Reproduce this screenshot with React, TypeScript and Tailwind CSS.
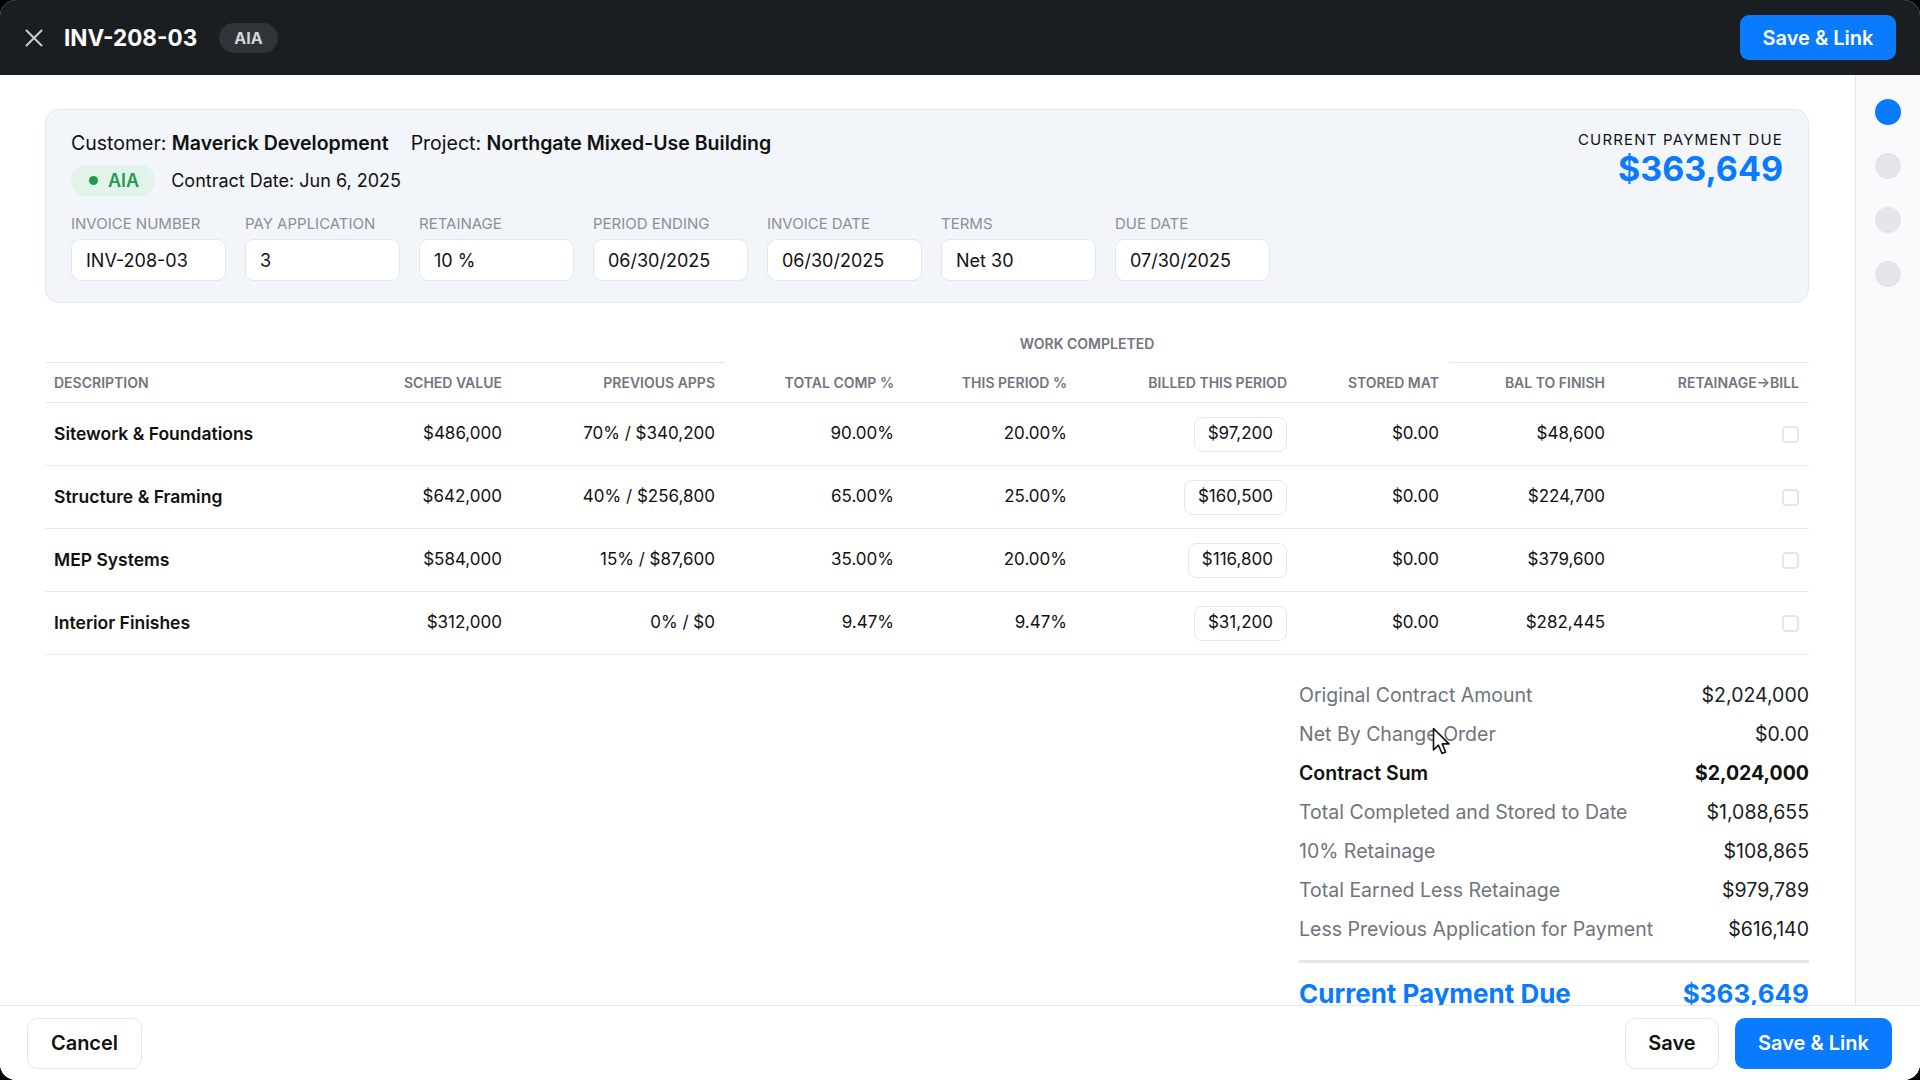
import React from 'react'

const FONT = { fontFamily: 'Inter, "Noto Sans", sans-serif' }

const FIELDS = [
  { label: 'Invoice Number', value: 'INV-208-03' },
  { label: 'Pay Application', value: '3' },
  { label: 'Retainage', value: '10 %' },
  { label: 'Period Ending', value: '06/30/2025' },
  { label: 'Invoice Date', value: '06/30/2025' },
  { label: 'Terms', value: 'Net 30' },
  { label: 'Due Date', value: '07/30/2025' },
]

const COLS = 'grid grid-cols-[290px_177px_213px_179px_173px_220px_152px_166px_194px]'

const HEADERS = [
  'Description',
  'Sched Value',
  'Previous Apps',
  'Total Comp %',
  'This Period %',
  'Billed This Period',
  'Stored Mat',
  'Bal To Finish',
  'Retainage→Bill',
]

const ROWS = [
  { name: 'Sitework & Foundations', sched: '$486,000', prev: '70% / $340,200', total: '90.00%', period: '20.00%', billed: '$97,200', stored: '$0.00', bal: '$48,600' },
  { name: 'Structure & Framing', sched: '$642,000', prev: '40% / $256,800', total: '65.00%', period: '25.00%', billed: '$160,500', stored: '$0.00', bal: '$224,700' },
  { name: 'MEP Systems', sched: '$584,000', prev: '15% / $87,600', total: '35.00%', period: '20.00%', billed: '$116,800', stored: '$0.00', bal: '$379,600' },
  { name: 'Interior Finishes', sched: '$312,000', prev: '0% / $0', total: '9.47%', period: '9.47%', billed: '$31,200', stored: '$0.00', bal: '$282,445' },
]

const SUMMARY = [
  { label: 'Original Contract Amount', value: '$2,024,000' },
  { label: 'Net By Change Order', value: '$0.00' },
  { label: 'Contract Sum', value: '$2,024,000', bold: true },
  { label: 'Total Completed and Stored to Date', value: '$1,088,655' },
  { label: '10% Retainage', value: '$108,865' },
  { label: 'Total Earned Less Retainage', value: '$979,789' },
  { label: 'Less Previous Application for Payment', value: '$616,140' },
]

function HeaderCard() {
  return (
    <div className="flex justify-between rounded-[14px] border border-[#e3e7ed] bg-[#f2f5fa] px-[25px] pt-[20px] pb-[21px]">
      <div className="flex flex-col">
        <div className="flex items-center gap-[22px] text-[19.5px] leading-[26px] text-[#111]">
          <span>
            Customer: <span className="font-semibold">Maverick Development</span>
          </span>
          <span>
            Project: <span className="font-semibold">Northgate Mixed-Use Building</span>
          </span>
        </div>
        <div className="mt-[9px] flex items-center gap-[16px]">
          <span className="flex h-[31px] items-center gap-[10px] rounded-full bg-[#e2f3e9] pl-[18px] pr-[16px] text-[18px] font-semibold text-[#1f9a52]">
            <span className="h-[9px] w-[9px] rounded-full bg-[#1f9a52]" />
            AIA
          </span>
          <span className="text-[18px] text-[#111]">Contract Date: Jun 6, 2025</span>
        </div>
        <div className="mt-[18px] flex gap-[19px]">
          {FIELDS.map((f) => (
            <div key={f.label} className="flex w-[155px] flex-col">
              <span className="whitespace-nowrap text-[15px] uppercase leading-[20px] text-[#8a9099]">{f.label}</span>
              <div className="mt-[5px] flex h-[42px] items-center rounded-[9px] border border-[#e3e7ed] bg-white px-[14px] text-[18px] text-[#111]">
                {f.value}
              </div>
            </div>
          ))}
        </div>
      </div>
      <div className="flex flex-col items-end">
        <span className="text-[15px] uppercase leading-[20px] tracking-[0.08em] text-[#111]">Current Payment Due</span>
        <span className="text-[34px] font-bold leading-[38px] text-[#0a7aff]">$363,649</span>
      </div>
    </div>
  )
}

function Table() {
  const right = 'flex items-center justify-end px-[10px]'
  return (
    <div className="mt-[21px]">
      {/* group header */}
      <div className={`${COLS} h-[39px]`}>
        <div className="col-span-3 border-b border-[#e5e7eb]" />
        <div className="col-span-4 flex items-center justify-center text-[14px] font-semibold uppercase text-[#71767e]">
          Work Completed
        </div>
        <div className="col-span-2 border-b border-[#e5e7eb]" />
      </div>
      <div className={`${COLS} h-[40px] border-b border-[#e5e7eb]`}>
        {HEADERS.map((h, i) => (
          <div
            key={h}
            className={`flex items-center whitespace-nowrap text-[14px] font-semibold uppercase text-[#71767e] ${i === 0 ? 'justify-start pl-[9px]' : 'justify-end pr-[10px]'}`}
          >
            {h}
          </div>
        ))}
      </div>
      {ROWS.map((r) => (
        <div key={r.name} className={`${COLS} h-[63px] border-b border-[#e9ebee] text-[17px] text-[#111]`}>
          <div className="flex items-center pl-[9px] text-[17.5px] font-semibold">{r.name}</div>
          <div className={right}>{r.sched}</div>
          <div className={right}>{r.prev}</div>
          <div className={right}>{r.total}</div>
          <div className={right}>{r.period}</div>
          <div className={right}>
            <span className="flex h-[35px] items-center rounded-[8px] border border-[#e5e7eb] bg-white px-[13px]">{r.billed}</span>
          </div>
          <div className={right}>{r.stored}</div>
          <div className={right}>{r.bal}</div>
          <div className={right}>
            <span className="h-[17px] w-[17px] rounded-[4px] border-2 border-[#e3e6ea] bg-white" />
          </div>
        </div>
      ))}
    </div>
  )
}

function Summary() {
  return (
    <div className="mt-[21px] flex justify-end">
      <div className="flex w-[510px] flex-col">
        {SUMMARY.map((s) => (
          <div
            key={s.label}
            className={`flex h-[39px] items-center justify-between text-[19.5px] ${s.bold ? 'font-semibold text-[#111]' : 'text-[#6f747c]'}`}
          >
            <span>{s.label}</span>
            <span className={s.bold ? 'font-bold text-[#111]' : 'text-[#1a1d21]'}>{s.value}</span>
          </div>
        ))}
        <div className="mt-[11px] h-[3px] bg-[#e5e7eb]" />
        <div className="mt-[11px] flex items-center justify-between text-[26px] font-bold text-[#0a7aff]">
          <span>Current Payment Due</span>
          <span>$363,649</span>
        </div>
      </div>
    </div>
  )
}

function Cursor() {
  return (
    <svg className="absolute left-[1432px] top-[652px]" width="20" height="30" viewBox="0 0 20 30">
      <path d="M1.5 1.5 L1.5 23 L6.5 18.2 L10 26.5 L13.6 25 L10.2 16.9 L17 16.9 Z" fill="#fff" stroke="#111" strokeWidth="1.6" strokeLinejoin="round" />
    </svg>
  )
}

export default function App() {
  return (
    <div className="h-[1080px] w-[1920px] bg-black" style={FONT}>
      <div className="flex h-full flex-col overflow-hidden rounded-[16px] bg-white">
        {/* top bar */}
        <div className="flex h-[75px] shrink-0 items-center justify-between bg-[#1b1e21] pl-[25px] pr-[24px]">
          <div className="flex items-center">
            <svg width="18" height="18" viewBox="0 0 18 18" fill="none" stroke="#c9cdd2" strokeWidth="2" strokeLinecap="round">
              <path d="M1.5 1.5 L16.5 16.5 M16.5 1.5 L1.5 16.5" />
            </svg>
            <span className="ml-[21px] text-[22.5px] font-bold text-white">INV-208-03</span>
            <span className="ml-[22px] flex h-[30px] items-center rounded-full bg-[#303438] px-[15px] text-[16px] font-bold text-[#d2d5da]">
              AIA
            </span>
          </div>
          <button className="flex h-[45px] w-[156px] items-center justify-center rounded-[9px] bg-[#0a7aff] text-[20px] font-semibold text-white">
            Save &amp; Link
          </button>
        </div>

        {/* body */}
        <div className="relative flex min-h-0 flex-1">
          <div className="min-w-0 flex-1 overflow-hidden pl-[45px] pr-[46px] pt-[34px]">
            <HeaderCard />
            <Table />
            <Summary />
          </div>
          <div className="flex w-[65px] shrink-0 flex-col items-center gap-[28px] border-l border-[#e5e7eb] bg-[#f9fafb] pt-[24px]">
            <span className="h-[26px] w-[26px] rounded-full bg-[#0a7aff]" />
            <span className="h-[26px] w-[26px] rounded-full bg-[#e3e6ea]" />
            <span className="h-[26px] w-[26px] rounded-full bg-[#e3e6ea]" />
            <span className="h-[26px] w-[26px] rounded-full bg-[#e3e6ea]" />
          </div>
          <Cursor />
        </div>

        {/* footer */}
        <div className="flex h-[75px] shrink-0 items-center justify-between border-t border-[#e5e7eb] bg-white pl-[27px] pr-[28px]">
          <button className="flex h-[51px] w-[115px] items-center justify-center rounded-[10px] border border-[#e3e6ea] text-[20px] font-semibold text-[#111]">
            Cancel
          </button>
          <div className="flex items-center gap-[16px]">
            <button className="flex h-[51px] w-[94px] items-center justify-center rounded-[10px] border border-[#e3e6ea] text-[20px] font-semibold text-[#111]">
              Save
            </button>
            <button className="flex h-[51px] w-[157px] items-center justify-center rounded-[10px] bg-[#0a7aff] text-[20px] font-semibold text-white">
              Save &amp; Link
            </button>
          </div>
        </div>
      </div>
    </div>
  )
}
